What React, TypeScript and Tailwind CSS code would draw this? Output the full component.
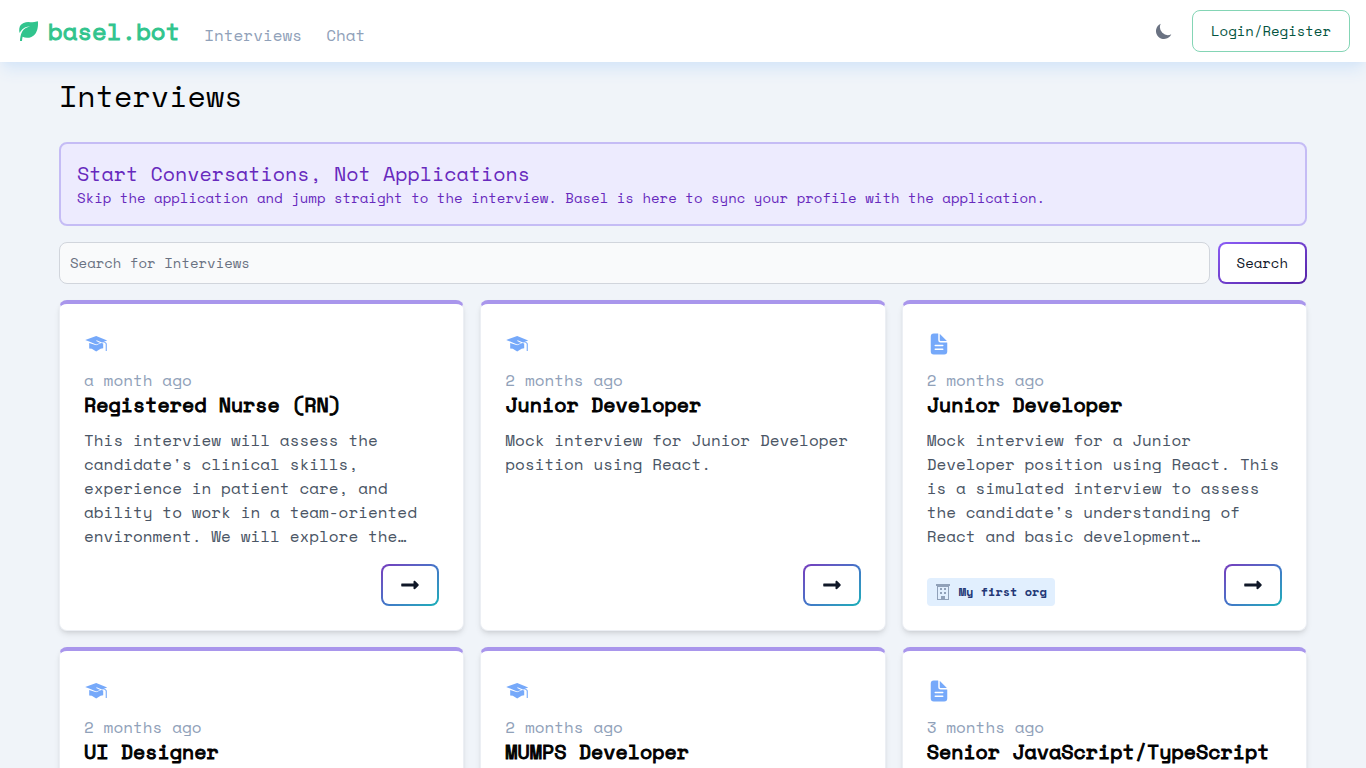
import { BiSolidLeaf } from "react-icons/bi";
import { HiMoon } from "react-icons/hi";
import { IoDocumentText } from "react-icons/io5";
import { FaLongArrowAltRight } from "react-icons/fa";

type Interview = {
  id: number;
  mock: boolean;
  age: string;
  title: string;
  description: string;
  org?: string;
};

const interviews: Interview[] = [
  {
    id: 1,
    mock: true,
    age: "a month ago",
    title: "Registered Nurse (RN)",
    description:
      "This interview will assess the candidate's clinical skills, experience in patient care, and ability to work in a team-oriented environment. We will explore the…",
  },
  {
    id: 2,
    mock: true,
    age: "2 months ago",
    title: "Junior Developer",
    description: "Mock interview for Junior Developer position using React.",
  },
  {
    id: 3,
    mock: false,
    age: "2 months ago",
    title: "Junior Developer",
    description:
      "Mock interview for a Junior Developer position using React. This is a simulated interview to assess the candidate's understanding of React and basic development…",
    org: "My first org",
  },
  { id: 4, mock: true, age: "2 months ago", title: "UI Designer", description: "" },
  { id: 5, mock: true, age: "2 months ago", title: "MUMPS Developer", description: "" },
  { id: 6, mock: false, age: "3 months ago", title: "Senior JavaScript/TypeScript", description: "" },
];

function GraduationCap({ className }: { className?: string }) {
  return (
    <svg viewBox="0 0 24 24" className={className} fill="currentColor" aria-hidden="true">
      <path d="M12.2 4 1.2 8l4 1.6 7 3 4-1.6-4-2 .4-.8 5.4 2.3 5.2-2.1z" />
      <path d="M5.2 11v5.4l2.6.4 4.4 2.6 4.4-2.6 2.6-.6v-4.6l-2-.7-5 2.4z" />
      <path d="M16.6 9.8c3 .5 4.9 1 5.1 2.2v6.9h1.1v-7.2c-.3-1.7-2.4-2.3-5.4-2.8z" />
    </svg>
  );
}

function Building({ className }: { className?: string }) {
  return (
    <svg viewBox="0 0 16 16" className={className} fill="currentColor" aria-hidden="true">
      <path d="M1 0h14v2H1z" />
      <path fillRule="evenodd" d="M2 2h12v14H2zM3 3v12h3v-3h4v3h3V3z" />
      <path d="M5 4h2v2H5zM9 4h2v2H9zM5 8h2v2H5zM9 8h2v2H9zM7 13h2v2H7z" />
    </svg>
  );
}

function Navbar() {
  return (
    <nav className="relative z-10 flex items-center justify-between bg-white px-4 py-2.5 shadow-lg shadow-[#d6e6f8]">
      <div className="flex items-center">
        <a href="#" className="flex items-center gap-2 text-2xl text-[#31c48d]">
          <BiSolidLeaf className="size-6" />
          <span className="[-webkit-text-stroke:1px]">basel.bot</span>
        </a>
        <ul className="flex gap-6 pt-2 pl-6 text-base text-slate-400">
          <li>
            <a href="#interviews">Interviews</a>
          </li>
          <li>
            <a href="#chat">Chat</a>
          </li>
        </ul>
      </div>
      <div className="flex items-center gap-2">
        <button type="button" aria-label="Toggle dark mode" className="p-2.5 text-gray-500">
          <HiMoon className="size-5" />
        </button>
        <button
          type="button"
          className="h-[42px] rounded-lg border border-[#84d5b5] bg-white px-[18px] text-sm text-[#03543f]"
        >
          Login/Register
        </button>
      </div>
    </nav>
  );
}

function OrgBadge({ name }: { name: string }) {
  return (
    <span className="flex h-7 items-center gap-2 rounded-sm bg-[#e1effe] px-2 text-xs font-bold text-[#233876]">
      <Building className="size-4 text-slate-400" />
      {name}
    </span>
  );
}

function InterviewCard({ interview }: { interview: Interview }) {
  const Icon = interview.mock ? GraduationCap : IoDocumentText;

  return (
    <article className="flex flex-col rounded-lg border border-t-4 border-[#eceff4] border-t-[#a996ec] bg-white px-6 pt-7 pb-6 shadow-md">
      <Icon className="size-6 text-[#76a9fa]" />
      <p className="mt-3 text-base text-slate-400">{interview.age}</p>
      <h2 className="text-xl leading-[26px] text-black [-webkit-text-stroke:1px]">{interview.title}</h2>
      <p className="mt-2.5 line-clamp-5 h-[120px] text-base text-gray-600">{interview.description}</p>
      <div className="mt-4 flex items-end justify-between">
        {interview.org ? <OrgBadge name={interview.org} /> : <span />}
        <button
          type="button"
          aria-label={`Open ${interview.title}`}
          className="rounded-lg bg-linear-to-br from-[#7439bd] via-[#4274c8] to-[#12b0b8] p-0.5"
        >
          <span className="flex h-[38px] items-center rounded-md bg-white px-[17px] text-gray-900">
            <FaLongArrowAltRight className="size-5" />
          </span>
        </button>
      </div>
    </article>
  );
}

export default function App() {
  return (
    <div className="min-h-screen bg-[#f0f4f9] font-['Space_Mono','Liberation_Mono',monospace]">
      <Navbar />
      <main className="px-[59px] pt-4 pb-4">
        <h1 className="text-3xl text-black">Interviews</h1>

        <section className="mt-7 rounded-lg border-2 border-[#c5bcf5] bg-[#edebfe] px-4 py-4 text-[#6729bd]">
          <h2 className="text-xl leading-7">Start Conversations, Not Applications</h2>
          <p className="text-sm">
            Skip the application and jump straight to the interview. Basel is here to sync your profile with the
            application.
          </p>
        </section>

        <form className="mt-4 flex gap-2" onSubmit={(e) => e.preventDefault()}>
          <input
            type="text"
            aria-label="Search for Interviews"
            placeholder="Search for Interviews"
            className="h-[42px] min-w-0 flex-1 rounded-lg border border-gray-300 bg-[#f9fafb] px-2.5 pb-0.5 text-sm placeholder:text-gray-500"
          />
          <button type="submit" className="rounded-lg bg-linear-to-br from-[#8b5cf6] to-[#5521a5] p-0.5">
            <span className="flex h-[38px] items-center rounded-md bg-white px-[17px] text-sm text-gray-900">
              Search
            </span>
          </button>
        </form>

        <div className="mt-4 grid grid-cols-3 gap-4">
          {interviews.map((interview) => (
            <InterviewCard key={interview.id} interview={interview} />
          ))}
        </div>
      </main>
    </div>
  );
}
